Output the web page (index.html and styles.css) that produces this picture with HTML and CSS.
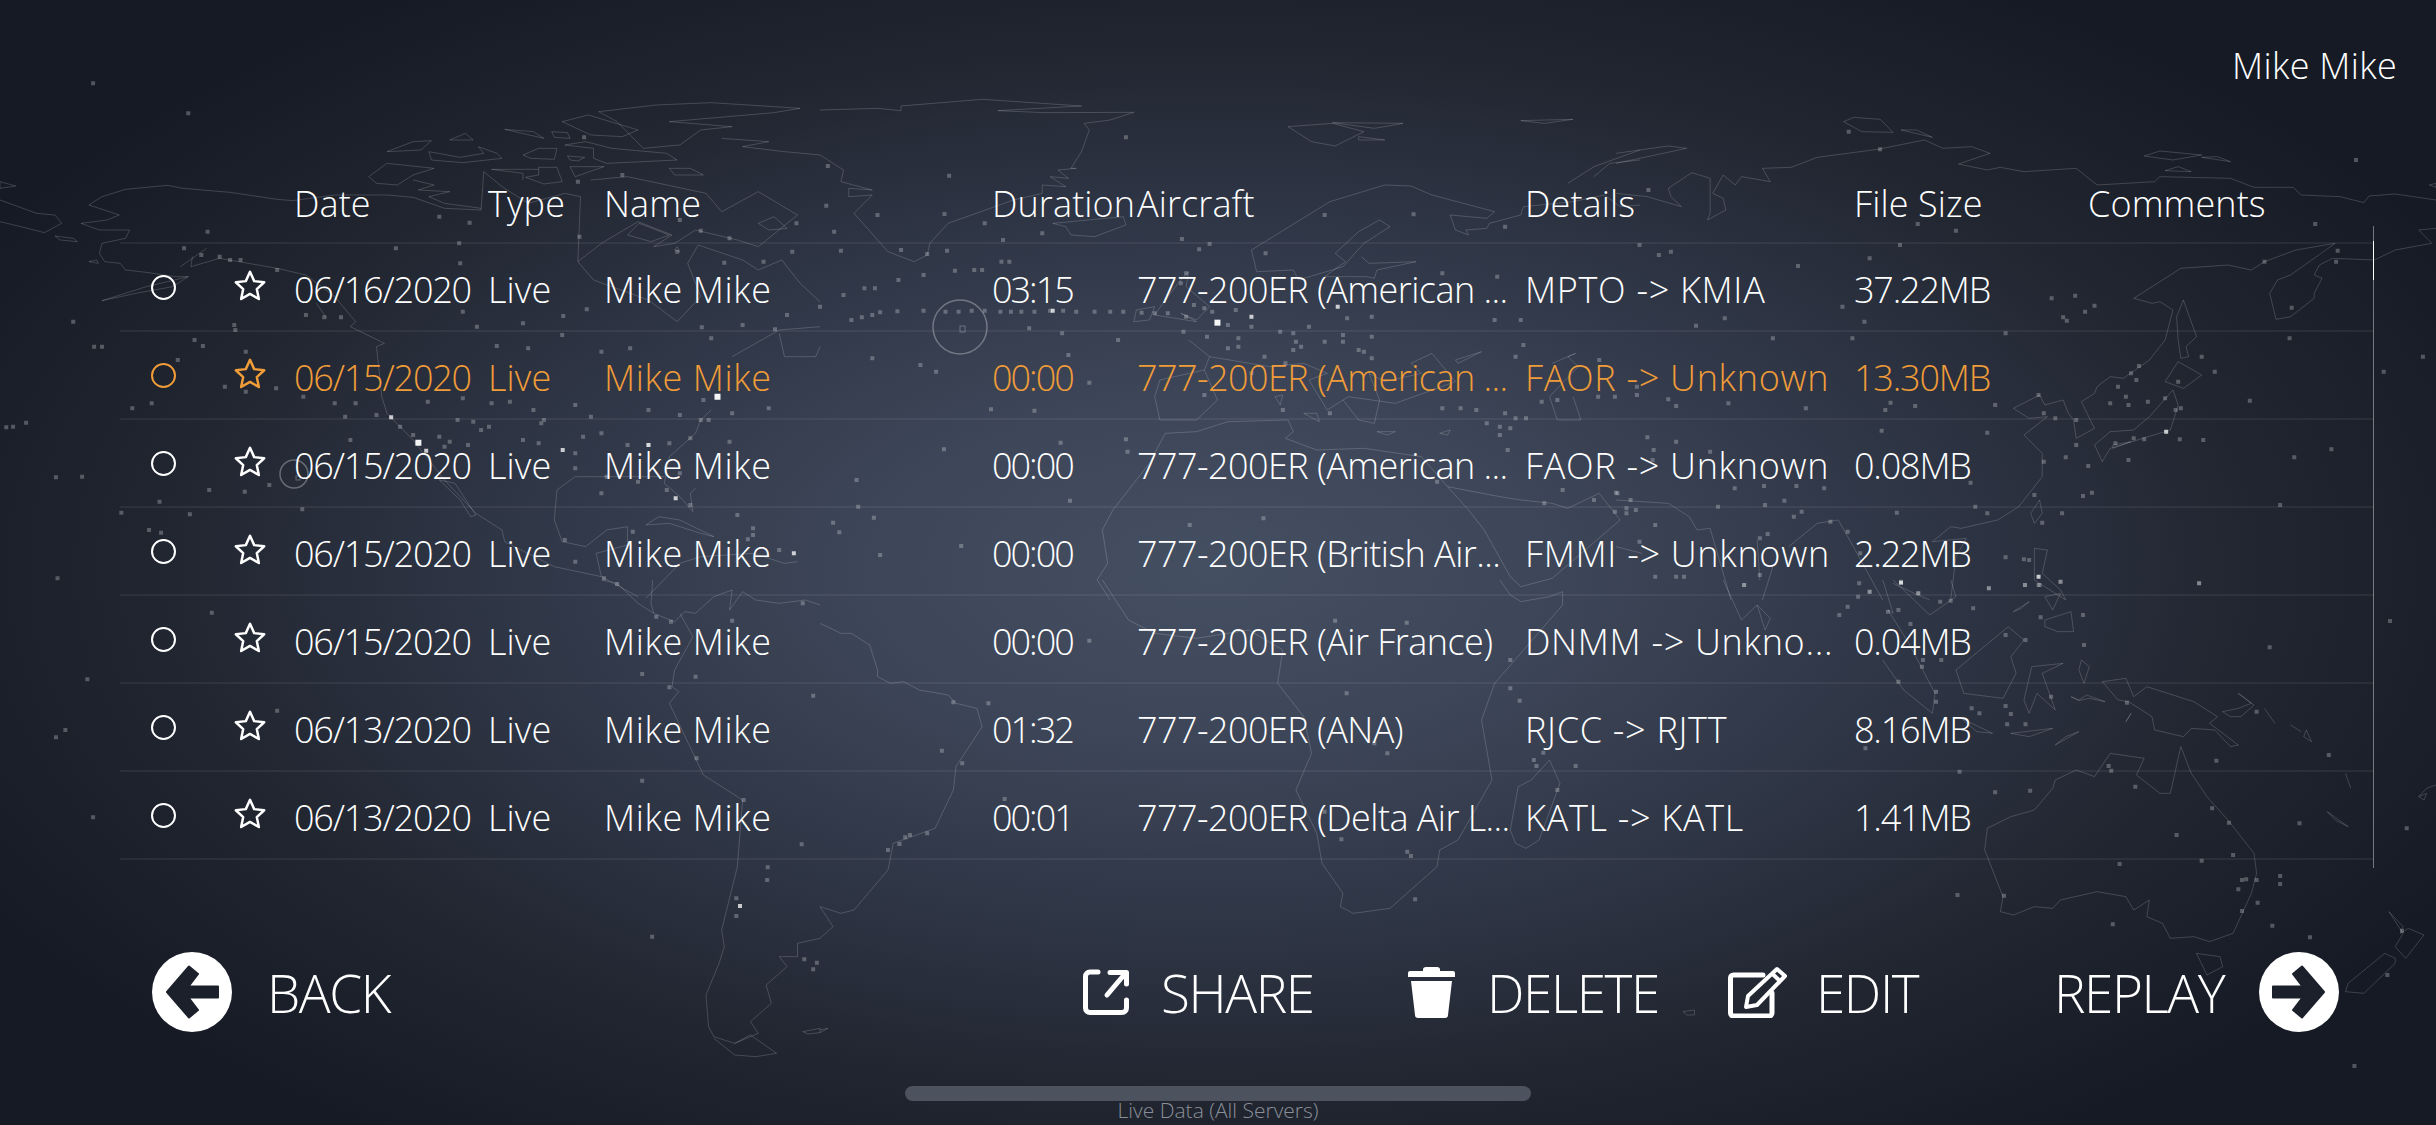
FILE: index.html
```html
<!DOCTYPE html>
<html lang="en">
<head>
<meta charset="utf-8">
<title>Live Data</title>
<link rel="stylesheet" href="styles.css">
</head>
<body>
<div class="screen">
  <svg class="map" width="2436" height="1125" viewBox="0 0 2436 1125" aria-hidden="true">
    <g transform="translate(0,80) scale(.52296,.33333)">
      <path class="land" d="M0 360L70 400 105 405 118 430 85 458 40 440 0 425M105 468L140 475 148 485 115 480ZM170 375L228 405 205 420 155 430 190 450 248 450 240 475 195 490 190 520 200 545 230 550 240 570 285 578 335 590 360 590 330 620 260 640 195 662 280 620 360 590M170 545L185 540 188 550ZM345 560L395 505M368 530L365 560 420 535 530 565 585 585 640 650 680 725 670 740 735 790 720 800 730 950 740 1000 790 1080 850 1200 910 1300 960 1350 965 1385 1060 1460 1150 1490 1220 1550M605 670L625 715M840 1200L870 1210 910 1305 900 1310 880 1260ZM170 375L195 350 240 328 320 316 350 325 440 337 530 358 560 362 640 345 740 345 790 352 850 385 920 390 925 275 960 320 1010 370 1080 340 1110 350 1105 545 1135 600 1240 660 1295 725 1340 650 1315 550 1335 495 1420 540 1450 570 1495 540 1530 610 1568 665M1105 545L1150 490 1220 425 1285 465 1250 500 1290 490 1330 450 1410 480 1450 500 1525 405 1450 335 1380 395 1350 340 1200 290 1130 300M1200 465L1222 430 1280 465 1245 485ZM1295 500L1300 515 1290 510ZM1450 430L1480 410 1505 445 1470 450ZM1568 740L1490 750 1400 830M1490 760L1500 830 1560 830 1568 800M1360 990L1340 1020 1330 1060 1280 1130 1270 1210 1300 1250 1325 1295 1320 1240 1330 1225M1270 1190L1100 1190 1065 1230 1060 1320 1075 1385 1120 1400 1160 1350 1200 1340 1200 1395 1140 1420 1150 1490M1235 1335L1260 1310 1300 1320 1365 1370 1340 1360 1280 1330ZM705 290L740 250 830 265 790 285 760 315 720 310ZM740 215L790 185 825 182 805 210ZM860 180L890 160 905 180ZM820 215L825 240 885 248 960 235 950 220 915 200 925 220 880 232ZM965 148L1040 175 1020 155ZM1055 155L1085 158 1090 175 1060 172ZM1000 225L1030 205 1065 205 1060 238 1015 235ZM1030 262L1065 262 1075 305 1040 312 1005 292 1030 285ZM1085 228L1118 232 1105 243 1090 240ZM1080 195L1135 205 1135 235 1160 250 1295 240 1275 220 1170 205 1120 185ZM1090 260L1155 260 1100 290ZM1280 265L1320 265 1345 285 1290 285ZM1075 125L1125 105 1220 150 1190 170 1130 165ZM1145 95L1255 75 1360 68 1530 85 1480 98 1280 125 1400 140 1340 150 1300 195 1230 205 1180 125ZM1380 175L1470 185 1420 200 1500 215 1568 225M1030 268L940 268 1000 280 1000 300M790 300L830 315 800 330 860 335 820 350 850 370 920 385M0 305L30 318 0 325ZM1235 1555L1300 1450 1340 1430 1440 1420 1500 1450 1525 1445"/>
    </g>
    <circle class="ring" cx="294" cy="474" r="14"/>
    <circle class="ring" cx="960" cy="327" r="27"/>
    <rect class="ring-thin" x="960" y="326" width="5" height="6"/>
    <rect class="ring-thin" x="296" y="476" width="4" height="4"/>
    <g transform="translate(820,80) scale(.52296,.33333)">
      <path class="land" d="M0 90L110 85 155 92 155 78 310 58 500 78 340 92 430 98 600 97 555 120 505 130 515 150 500 215 480 265 490 265 455 270 475 295 440 290 470 320 425 315 425 340 370 360 245 430 210 490 205 525 180 545 130 515 65 400 100 345 55 350 55 325 100 330 40 305 45 270 0 225M445 430L580 410 585 435 525 470 480 465 470 440ZM895 140L980 130 1040 155 985 198 940 185ZM980 128L1115 130 1060 145ZM1030 170L1080 180 1030 180ZM1340 122L1440 118 1385 130ZM825 510L975 365 1080 315 1130 318 1170 345 1290 395 1275 415 1205 405 1215 450 1240 465 1235 450 1275 445 1280 430 1340 405 1345 380 1440 365 1500 345 1530 380 1568 375M1430 310L1480 260 1568 210M1480 290L1510 250 1568 240M825 510L835 575 905 570 915 600 1000 560 1040 490 1090 440 1070 420 1030 455 985 520 1005 545 965 590 1045 590 1060 595 1065 570 1140 545 1050 550 1035 530M640 705L660 660 690 600 705 575 700 620 745 680 720 720 690 700 720 725ZM605 690L640 680 630 720 600 725ZM705 780L745 830 735 870 650 900 640 950 650 1020 720 1020 760 960 735 870M745 830L860 860 925 850 970 880 935 900 970 990 1010 950 1100 970 1215 905 1170 820 1130 850 1150 880 1080 905 1050 880 1070 960 1060 1030 1030 1020 1000 960M925 1000L950 1000 955 1025ZM870 950L885 945 880 975ZM1065 1055L1100 1055 1085 1065ZM1185 1060L1205 1050 1200 1065ZM1215 840L1265 815 1220 850ZM1400 850L1445 820 1430 830 1450 860 1395 950 1410 1020 1455 1020 1440 950M660 1060L720 1055 780 1025 895 1020 905 1055 890 1075 950 1110 1040 1105 1150 1130 1200 1220 1240 1290 1270 1350 1320 1490 1340 1520 1400 1495 1530 1320 1490 1240 1430 1285 1400 1270 1340 1260 1300 1250 1200 1220M660 1060L630 1150 560 1290 540 1350 550 1450 530 1500 555 1560"/>
    </g>
    <g transform="translate(1616,80) scale(.52296,.33333)">
      <path class="land" d="M0 220L100 198 135 205 0 250M0 340L60 350 125 380 105 350 100 325 145 278 180 295 180 400 175 420 210 390 205 355 185 340 205 285 228 315 240 290 295 305 280 265 335 262 385 232 500 208 590 180 625 205 680 200 715 220 655 252 710 270 735 262 780 275 880 265 920 315 1030 305 1040 290 1175 295 1220 322 1295 322 1310 345 1385 350 1430 368 1440 348 1490 342 1568 360M435 125L455 112 505 118 530 157 470 155ZM545 150L575 150 605 172ZM1010 228L1040 213 1120 225 1065 240ZM1120 232L1150 230 1175 245ZM1050 272L1075 260 1100 275ZM1555 315L1568 310 1568 322ZM1568 445L1535 450 1560 490 1490 510 1450 540 1370 535 1345 555 1335 585 1350 595 1335 640 1335 655 1290 710 1262 718 1250 640 1265 600 1290 585 1375 490 1300 510 1240 545 1215 570 1170 555 1080 565 990 655 1025 670 1040 665 1065 690 1050 780 1020 840 970 895 945 890 920 920 915 940 890 965 910 1030 915 1045 880 1075 875 1020 865 1000 855 960 820 975 810 945 760 985 790 1015 825 1010 780 1065 815 1120 815 1190 770 1280 730 1320 660 1345 640 1340 605 1385 670 1375 650 1430 640 1560M1085 660L1072 710 1075 780 1080 835 1095 830 1090 800 1110 770ZM1075 845L1120 885 1085 925 1050 905ZM1065 930L1075 975 1060 1050 945 1105 930 1145 915 1095 945 1055 990 1050 1020 1010ZM950 1095L985 1085 950 1105ZM810 1260L815 1300 800 1330 793 1300ZM0 1260L100 1270 140 1310 155 1350 180 1345 190 1400 220 1560M0 1400L50 1420M330 1400L385 1330 425 1320 445 1375 510 1560M270 1380L275 1500M280 1560L300 1460M800 1405L825 1410 815 1480 850 1530 860 1560 800 1500ZM530 1510L570 1540 600 1560"/>
    </g>
    <g transform="translate(0,580) scale(.52296,.33333)">
      <path class="land" d="M1150 0L1180 10 1220 70 1250 100 1290 125 1310 95 1330 100 1365 50 1400 30 1395 90 1420 35 1445 60 1490 70 1540 60 1568 75M1248 0L1245 70 1250 100M1300 100L1325 170 1290 270 1285 320 1298 335 1280 370 1345 585 1420 660 1410 860 1380 1050 1385 1100 1375 1150 1350 1245 1355 1340 1365 1370 1405 1390 1435 1365 1485 1420 1445 1430 1405 1425 1365 1375M1568 1075L1525 1090 1525 1130 1490 1130 1505 1160 1465 1215 1475 1270 1435 1325 1450 1360 1405 1390M1535 1355L1568 1345 1568 1358 1545 1362Z"/>
    </g>
    <g transform="translate(820,580) scale(.52296,.33333)">
      <path class="land" d="M0 130L40 160 60 160 95 195 110 270 110 290 135 310 160 305 190 330 245 345 260 370 300 385 310 440 260 560 255 630 220 745 140 790 130 870 65 990 40 1000 0 980 25 1040 0 1075M0 1350L15 1345 0 1358M540 0L590 120 640 160 720 175 820 150 885 210 875 310 925 410 940 520 910 630 950 760 960 850 1000 940 995 980 1020 1000 1090 985 1180 860 1185 810 1220 780 1285 600 1265 420 1290 310 1420 75 1420 35 1395 50 1340 65 1320 45 1300 0M1395 540L1415 610 1375 780 1350 805 1330 790 1320 750 1335 620 1360 600Z"/>
    </g>
    <g transform="translate(1616,580) scale(.52296,.33333)">
      <path class="land" d="M205 0L240 120 270 75 295 115 285 150 270 75M510 0L530 100 520 90 560 190 610 340 605 400 550 330 510 240M640 0L650 50 600 105 530 0M650 270L750 140 780 180 755 230 765 280 740 355 665 340ZM795 260L855 250 815 280 840 390 805 340 790 400 780 360ZM660 415L720 460 690 455ZM755 460L835 445 790 470ZM840 495L885 455 860 470ZM820 120L870 95 875 155 845 155 820 140ZM890 240L905 260 895 310 885 270ZM760 95L790 65 775 85ZM820 50L850 40 835 90ZM930 305L975 295 990 350 1015 320 1105 365 1150 410 1135 430 1190 495 1175 500 1145 450 1100 445 1085 470 1030 450 1025 410 980 365 960 360ZM870 350L885 360 900 345 935 365 905 355 885 362ZM975 425L985 400ZM1160 395L1190 385 1215 370 1190 340 1220 375 1195 410 1175 410ZM1240 385L1260 430M1290 435L1310 455M1320 450L1330 485 1315 470ZM1395 580L1405 625M710 745L755 710 800 690 835 625 840 600 880 570 915 590 945 520 1010 535 995 585 1040 640 1060 640 1080 500 1100 580 1130 650 1170 720 1220 820 1225 880 1215 940 1180 1060 1135 1085 1105 1070 1060 1075 1045 1030 1015 1010 1020 960 990 990 975 950 920 935 850 960 835 985 800 980 760 1005 735 995 740 950 705 810ZM1110 1120L1155 1130 1160 1160 1130 1185ZM1478 995L1505 1040 1500 1060 1515 1045 1545 1065 1510 1135 1490 1100 1505 1060ZM1470 1120L1490 1135 1490 1150 1430 1240 1395 1235 1400 1210ZM1360 695L1400 740 1375 720ZM1535 650L1550 625 1568 615M1535 650L1550 640 1545 660ZM128 1295L150 1290 150 1305 135 1305Z"/>
    </g>
    <g transform="translate(0,80) scale(.52296,.33333)">
      <path class="dots" d="M178 10h0M360 100h0M397 455h0M352 505h0M385 525h0M420 530h0M440 540h0M460 540h0M530 570h0M880 550h0M757 505h0M878 490h0M840 410h0M898 428h0M1108 470h0M1190 285h0M1117 172h0M1105 305h0M1300 420h0M1340 452h0M1395 475h0M1523 430h0M1515 515h0M1385 548h0M1295 515h0M1460 545h0M140 725h0M180 800h0M195 800h0M372 780h0M388 798h0M448 735h0M450 750h0M585 705h0M620 712h0M652 712h0M885 695h0M912 740h0M1000 730h0M1077 708h0M1075 765h0M1122 688h0M1420 735h0M1505 705h0M1482 748h0M1360 775h0M1342 742h0M950 798h0M1010 805h0M1205 805h0M1150 815h0M470 815h0M340 840h0M430 920h0M290 970h0M253 985h0M470 935h0M528 925h0M580 950h0M640 970h0M660 1010h0M680 970h0M720 1005h0M818 965h0M885 955h0M940 970h0M975 965h0M1020 990h0M1040 1020h0M1100 975h0M1130 1010h0M1240 990h0M1300 1005h0M1345 960h0M1355 1020h0M1400 1000h0M1470 985h0M50 1028h0M25 1040h0M12 1042h0M765 1040h0M790 1065h0M840 1070h0M850 1100h0M875 1020h0M905 1025h0M920 1050h0M860 1085h0M895 1095h0M935 1040h0M1000 1080h0M1030 1090h0M1035 1030h0M1100 1120h0M1115 1070h0M1150 1060h0M1200 1095h0M1240 1095h0M1340 1020h0M1280 1090h0M1320 1075h0M1395 1085h0M670 1080h0M1100 1165h0M1160 1190h0M1220 1205h0M1300 1180h0M1275 1230h0M1150 1240h0M107 1192h0M157 1190h0M515 1215h0M468 1235h0M400 1230h0M305 1265h0M232 1298h0M363 1303h0M578 1288h0M1410 1305h0M1320 1275h0M285 1350h0M308 1358h0M110 1495h0M1440 1345h0M1440 1365h0M1430 1378h0M1210 1355h0M1080 1380h0M1100 1445h0M1155 1495h0M1490 1410h0"/>
      <path class="dots-bright" d="M748 1012h0M815 1112h0M1292 1255h0M1076 1110h0M1518 1420h0M1240 1095h0"/>
      <path class="dots-hot" d="M800 1088h0M1372 950h0"/>
    </g>
    <g transform="translate(820,80) scale(.52296,.33333)">
      <path class="dots" d="M585 172h0M247 287h0M15 258h0M12 377h0M110 405h0M238 402h0M27 455h0M350 480h0M425 460h0M315 430h0M692 477h0M745 492h0M725 508h0M852 520h0M965 405h0M1135 403h0M1310 440h0M40 512h0M155 510h0M205 522h0M243 512h0M347 545h0M362 545h0M258 572h0M295 570h0M310 570h0M198 585h0M150 600h0M105 625h0M85 625h0M45 645h0M0 680h0M60 720h0M80 712h0M100 705h0M115 697h0M148 694h0M198 692h0M240 695h0M265 695h0M290 692h0M315 692h0M345 695h0M365 695h0M385 695h0M410 695h0M440 692h0M465 692h0M490 695h0M525 695h0M555 695h0M580 695h0M615 698h0M640 700h0M665 700h0M570 780h0M400 745h0M463 760h0M475 825h0M192 855h0M100 835h0M222 875h0M515 908h0M327 988h0M410 992h0M237 1108h0M460 1088h0M585 1078h0M588 1115h0M70 1200h0M478 1262h0M73 1280h0M103 1313h0M25 1328h0M37 1357h0M270 1398h0M115 1425h0M707 1335h0M848 1315h0M700 580h0M690 610h0M715 675h0M735 685h0M780 735h0M795 690h0M750 695h0M700 710h0M695 755h0M740 770h0M800 775h0M825 740h0M880 755h0M905 760h0M910 785h0M935 740h0M1008 715h0M1055 710h0M1055 770h0M1000 765h0M965 785h0M920 800h0M1000 785h0M1030 810h0M800 800h0M780 805h0M850 830h0M905 810h0M825 880h0M890 850h0M1040 815h0M1055 835h0M1190 580h0M1295 590h0M1290 720h0M1340 720h0M1345 795h0M1330 830h0M1310 1000h0M1330 1015h0M1350 1015h0M1300 1040h0M1320 1045h0M1275 1030h0M1190 985h0M1225 985h0M1255 990h0M885 990h0M975 1000h0M735 945h0M1380 965h0M1410 960h0M1488 950h0M1520 950h0M1490 840h0M1385 1270h0M1420 1230h0M1480 1260h0M1525 1240h0M1520 1295h0M1550 1260h0M1560 1290h0M1180 1205h0M1300 1065h0M1315 1110h0"/>
      <path class="dots-bright" d="M445 692h0M990 680h0M825 710h0"/>
      <path class="dots-hot" d="M760 728h0"/>
    </g>
    <g transform="translate(1616,80) scale(.52296,.33333)">
      <path class="dots" d="M62 330h0M45 495h0M82 525h0M105 515h0M543 495h0M485 535h0M348 558h0M1415 240h0M1337 432h0M577 432h0M650 452h0M505 208h0M445 155h0M1240 545h0M1380 512h0M1377 545h0M208 715h0M153 737h0M475 725h0M433 680h0M300 775h0M452 775h0M745 760h0M833 655h0M878 647h0M915 677h0M897 695h0M855 712h0M862 722h0M1292 683h0M1288 775h0M1120 830h0M1145 875h0M1468 875h0M1543 830h0M1000 858h0M985 880h0M995 900h0M960 920h0M1075 905h0M975 950h0M980 975h0M945 970h0M1017 965h0M1050 955h0M1070 990h0M1080 985h0M1212 962h0M808 945h0M725 975h0M525 968h0M515 990h0M572 978h0M363 985h0M215 970h0M100 958h0M115 978h0M40 920h0M40 945h0M508 1052h0M710 1058h0M60 1072h0M115 1085h0M880 1020h0M840 1015h0M818 1000h0M880 1095h0M1368 1108h0M1297 1132h0M1123 1080h0M1078 1078h0M1010 1078h0M990 1075h0M955 1090h0M980 1140h0M903 1158h0M860 1132h0M818 1145h0M678 1208h0M800 1245h0M893 1248h0M910 1238h0M1270 1275h0M853 1300h0M815 1328h0M687 1280h0M710 1300h0M537 1298h0M355 1295h0M340 1310h0M322 1262h0M285 1275h0M195 1280h0M72 1110h0M70 1140h0M180 1115h0M283 1218h0M227 1225h0M345 1218h0M398 1225h0M0 1238h0M20 1285h0M20 1300h0M75 1335h0M410 1325h0M443 1355h0M275 1375h0M290 1362h0M45 1385h0M467 1420h0M745 1432h0M780 1438h0M790 1440h0M75 1490h0M115 1490h0M130 1490h0M275 1485h0M245 1515h0M545 1505h0M578 1540h0M485 1535h0M465 1510h0M713 1525h0M782 1515h0M810 1515h0M850 1505h0M1115 1510h0"/>
      <path class="dots-bright" d="M808 1490h0M1052 1055h0"/>
    </g>
    <g transform="translate(0,580) scale(.52296,.33333)">
      <path class="dots" d="M405 98h0M167 298h0M530 392h0M125 450h0M107 472h0M178 712h0M1228 282h0M1330 290h0M1280 322h0M1555 347h0M1332 535h0M1228 602h0M1422 660h0M1533 793h0M1468 862h0M1467 900h0M1408 955h0M1408 1008h0M1247 1070h0M1538 1138h0M1562 1148h0M1555 1168h0M1180 12h0M1255 110h0M1283 125h0M1400 122h0M1535 70h0"/>
      <path class="dots-bright" d="M1415 978h0"/>
    </g>
    <g transform="translate(820,580) scale(.52296,.33333)">
      <path class="dots" d="M985 122h0M1122 128h0M515 182h0M1320 240h0M1320 325h0M1338 362h0M1007 340h0M255 367h0M322 370h0M233 512h0M272 550h0M1060 490h0M1085 520h0M1383 518h0M1365 540h0M1370 558h0M1445 558h0M1410 630h0M205 760h0M172 765h0M163 772h0M152 792h0M130 810h0M353 657h0M997 778h0M1123 815h0M1130 828h0M1138 958h0M965 695h0"/>
    </g>
    <g transform="translate(1616,580) scale(.52296,.33333)">
      <path class="dots" d="M245 15h0M578 40h0M485 35h0M463 50h0M427 105h0M443 80h0M620 65h0M640 62h0M683 85h0M713 25h0M782 15h0M808 15h0M850 5h0M1115 10h0M893 105h0M812 112h0M745 165h0M783 180h0M895 195h0M1250 202h0M1480 123h0M520 95h0M540 90h0M563 132h0M587 240h0M622 240h0M585 260h0M540 305h0M612 335h0M612 365h0M680 385h0M695 400h0M745 378h0M755 402h0M748 433h0M783 433h0M977 368h0M832 350h0M1225 395h0M1148 542h0M1363 525h0M657 575h0M477 505h0M725 637h0M792 632h0M942 558h0M947 572h0M993 620h0M1140 685h0M1172 728h0M1307 730h0M1512 745h0M1072 765h0M1180 825h0M1120 842h0M963 852h0M1205 898h0M1197 900h0M1225 900h0M1190 928h0M1270 888h0M1270 912h0M1227 968h0M1197 993h0M742 947h0M653 945h0M950 1033h0M1255 1037h0M1327 1072h0M1503 1052h0M1475 1185h0M1412 1458h0"/>
      <path class="dots-bright" d="M545 8h0"/>
    </g>
  </svg>

  <header class="topbar"><span class="user">Mike Mike</span></header>

  <section class="table">
    <div class="row head">
      <span></span><span></span>
      <span>Date</span><span>Type</span><span>Name</span><span>Duration</span><span>Aircraft</span><span>Details</span><span>File Size</span><span>Comments</span>
    </div>
    <div class="row">
      <span class="radio"></span>
      <svg class="star" viewBox="0 0 30 30"><path d="M15 2.500L18.700 10.700 27.500 11.700 21 17.700 22.800 26.500 15 22 7.200 26.500 9 17.700 2.500 11.700 11.300 10.700Z"/></svg>
      <span>06/16/2020</span><span>Live</span><span>Mike Mike</span><span>03:15</span><span>777-200ER (American ...</span><span>MPTO -&gt; KMIA</span><span>37.22MB</span><span></span>
    </div>
    <div class="row active">
      <span class="radio"></span>
      <svg class="star" viewBox="0 0 30 30"><path d="M15 2.500L18.700 10.700 27.500 11.700 21 17.700 22.800 26.500 15 22 7.200 26.500 9 17.700 2.500 11.700 11.300 10.700Z"/></svg>
      <span>06/15/2020</span><span>Live</span><span>Mike Mike</span><span>00:00</span><span>777-200ER (American ...</span><span>FAOR -&gt; Unknown</span><span>13.30MB</span><span></span>
    </div>
    <div class="row">
      <span class="radio"></span>
      <svg class="star" viewBox="0 0 30 30"><path d="M15 2.500L18.700 10.700 27.500 11.700 21 17.700 22.800 26.500 15 22 7.200 26.500 9 17.700 2.500 11.700 11.300 10.700Z"/></svg>
      <span>06/15/2020</span><span>Live</span><span>Mike Mike</span><span>00:00</span><span>777-200ER (American ...</span><span>FAOR -&gt; Unknown</span><span>0.08MB</span><span></span>
    </div>
    <div class="row">
      <span class="radio"></span>
      <svg class="star" viewBox="0 0 30 30"><path d="M15 2.500L18.700 10.700 27.500 11.700 21 17.700 22.800 26.500 15 22 7.200 26.500 9 17.700 2.500 11.700 11.300 10.700Z"/></svg>
      <span>06/15/2020</span><span>Live</span><span>Mike Mike</span><span>00:00</span><span>777-200ER (British Air...</span><span>FMMI -&gt; Unknown</span><span>2.22MB</span><span></span>
    </div>
    <div class="row">
      <span class="radio"></span>
      <svg class="star" viewBox="0 0 30 30"><path d="M15 2.500L18.700 10.700 27.500 11.700 21 17.700 22.800 26.500 15 22 7.200 26.500 9 17.700 2.500 11.700 11.300 10.700Z"/></svg>
      <span>06/15/2020</span><span>Live</span><span>Mike Mike</span><span>00:00</span><span>777-200ER (Air France)</span><span>DNMM -&gt; Unkno...</span><span>0.04MB</span><span></span>
    </div>
    <div class="row">
      <span class="radio"></span>
      <svg class="star" viewBox="0 0 30 30"><path d="M15 2.500L18.700 10.700 27.500 11.700 21 17.700 22.800 26.500 15 22 7.200 26.500 9 17.700 2.500 11.700 11.300 10.700Z"/></svg>
      <span>06/13/2020</span><span>Live</span><span>Mike Mike</span><span>01:32</span><span>777-200ER (ANA)</span><span>RJCC -&gt; RJTT</span><span>8.16MB</span><span></span>
    </div>
    <div class="row">
      <span class="radio"></span>
      <svg class="star" viewBox="0 0 30 30"><path d="M15 2.500L18.700 10.700 27.500 11.700 21 17.700 22.800 26.500 15 22 7.200 26.500 9 17.700 2.500 11.700 11.300 10.700Z"/></svg>
      <span>06/13/2020</span><span>Live</span><span>Mike Mike</span><span>00:01</span><span>777-200ER (Delta Air L...</span><span>KATL -&gt; KATL</span><span>1.41MB</span><span></span>
    </div>
    <div class="track"><div class="thumb"></div></div>
  </section>

  <nav class="actions">
    <div class="action back">
      <svg class="round" viewBox="0 0 80 80"><circle cx="40" cy="40" r="40"/><path d="M15 40L37 14.500 46 22 36.500 34.500H66V45.500H36.500L46 58 37 65.500Z"/></svg>
      <span>BACK</span>
    </div>
    <div class="action share">
      <svg class="glyph icon-share" viewBox="0 0 46 46"><path d="M15 3H7A4.500 4.500 0 0 0 2.500 7.500V39A4.500 4.500 0 0 0 7 43.500H39A4.500 4.500 0 0 0 43.500 39V31M27 3.500H43.500V15M41 6L24 26"/></svg>
      <span>SHARE</span>
    </div>
    <div class="action delete">
      <svg class="glyph-fill icon-trash" viewBox="0 0 47 52"><path d="M15 3.500Q15 1 18 1H29Q32 1 32 3.500V5H45Q47 5 47 7V11H0V7Q0 5 2 5H15ZM3 15H44L40 49Q40 52 37 52H10Q7 52 7 49Z"/></svg>
      <span>DELETE</span>
    </div>
    <div class="action edit">
      <svg class="glyph icon-edit" viewBox="0 0 60 52"><path d="M35 9H5.500A3 3 0 0 0 2.500 12V47A3 3 0 0 0 5.500 50H41A3 3 0 0 0 44 47V27"/><path class="thin" d="M18 41L20 30 49 3 57 10 29 39ZM44 7.500L52 15"/></svg>
      <span>EDIT</span>
    </div>
    <div class="action replay">
      <span>REPLAY</span>
      <svg class="round" viewBox="0 0 80 80"><circle cx="40" cy="40" r="40"/><path d="M65 40L43 14.500 34 22 43.500 34.500H14V45.500H43.500L34 58 43 65.500Z"/></svg>
    </div>
  </nav>

  <footer class="pager">
    <div class="pill"></div>
    <div class="caption">Live Data (All Servers)</div>
  </footer>
</div>
</body>
</html>
```
FILE: styles.css
```css
* { box-sizing: border-box; }
html, body { margin: 0; padding: 0; }
body { background: #141925; }

.screen {
  position: relative;
  width: 2436px;
  height: 1125px;
  overflow: hidden;
  display: flex;
  flex-direction: column;
  color: #fff;
  font-family: "Open Sans", "Noto Sans", sans-serif;
  font-weight: 350;
  background: radial-gradient(ellipse 1400px 700px at 1210px 570px, #454f62 0%, #3d4658 25%, #2f3646 50%, #20252f 76%, #151a25 100%);
}
.screen > * { flex: none; }
.screen > .map { position: absolute; left: 0; top: 0; }

.land { fill: none; stroke: rgba(255, 255, 255, .17); stroke-width: 1px; vector-effect: non-scaling-stroke; }
.ring { fill: none; stroke: rgba(255, 255, 255, .3); stroke-width: 1.500px; }
.ring-thin { fill: none; stroke: rgba(255, 255, 255, .28); stroke-width: 1px; }
.dots, .dots-bright, .dots-hot { fill: none; stroke-linecap: square; vector-effect: non-scaling-stroke; }
.dots { stroke: rgba(255, 255, 255, .26); stroke-width: 4px; }
.dots-bright { stroke: rgba(255, 255, 255, .75); stroke-width: 4px; }
.dots-hot { stroke: rgba(255, 255, 255, .95); stroke-width: 6px; }

.topbar {
  position: relative;
  height: 112px;
  padding: 41px 39px 0 0;
  display: flex;
  justify-content: flex-end;
  align-items: flex-start;
}
.user { font-size: 36px; line-height: 50px; letter-spacing: .3px; }

.table { position: relative; margin-left: 120px; width: 2254px; }
.row {
  display: grid;
  grid-template-columns: 87px 87px 194px 116px 388px 145px 388px 329px 234px 286px;
  align-items: center;
  height: 88px;
  border-bottom: 2px solid rgba(255, 255, 255, .06);
  font-size: 36px;
  letter-spacing: .1px;
  white-space: nowrap;
}
.row > span { padding-top: 4px; }
.row.head { height: 132px; padding-top: 48px; }
.row.active { color: #f09c38; }

.row:not(.head) > :nth-child(3) { letter-spacing: -1.200px; }
.row:not(.head) > :nth-child(5) { letter-spacing: .6px; }
.row:not(.head) > :nth-child(6) { letter-spacing: -2px; }
.row:not(.head) > :nth-child(7) { letter-spacing: -.550px; }
.row:not(.head) > :nth-child(8) { letter-spacing: .7px; }
.row:not(.head) > :nth-child(9) { letter-spacing: -1.200px; }

.radio {
  justify-self: start;
  margin-left: 31px;
  width: 25px;
  height: 25px;
  border: 2.500px solid currentColor;
  border-radius: 50%;
}
.row > .radio { padding: 0; margin-top: 0; }
.star {
  width: 34px;
  height: 34px;
  margin: -2px 0 0 26px;
  fill: none;
  stroke: currentColor;
  stroke-width: 2.200px;
  stroke-linejoin: round;
}

.track {
  position: absolute;
  right: 0;
  top: 114px;
  bottom: -8px;
  width: 1px;
  background: rgba(255, 255, 255, .4);
}
.thumb { margin-top: 15px; height: 39px; background: #fff; }

.actions {
  position: relative;
  display: flex;
  align-items: center;
  height: 80px;
  margin-top: 92px;
  padding-left: 152px;
  font-size: 53px;
  letter-spacing: -1.400px;
}
.action { display: flex; align-items: center; flex: none; }
.action > span { padding-top: 1px; }
.round { width: 80px; height: 80px; fill: #fff; flex: none; }
.round path { fill: #1b202b; stroke: #1b202b; stroke-width: 2px; stroke-linejoin: round; }
.glyph { fill: none; stroke: #fff; stroke-width: 5px; stroke-linejoin: round; stroke-linecap: round; flex: none; }
.glyph .thin { stroke-width: 4px; }
.glyph-fill { fill: #fff; flex: none; }
.icon-share { width: 46px; height: 46px; }
.icon-trash { width: 47px; height: 52px; }
.icon-edit { width: 60px; height: 52px; }

.back { width: 931px; gap: 35px; }
.share { width: 325px; gap: 32px; }
.delete { width: 320px; gap: 32px; }
.edit { width: 326px; gap: 28px; }
.replay { width: 285px; justify-content: space-between; }

.pager {
  position: relative;
  display: flex;
  flex-direction: column;
  align-items: center;
  margin-top: 54px;
}
.pill { width: 626px; height: 15px; border-radius: 8px; background: #4d535e; }
.caption { margin-top: -3px; font-size: 21px; line-height: 24px; color: #8a8f99; }
```
